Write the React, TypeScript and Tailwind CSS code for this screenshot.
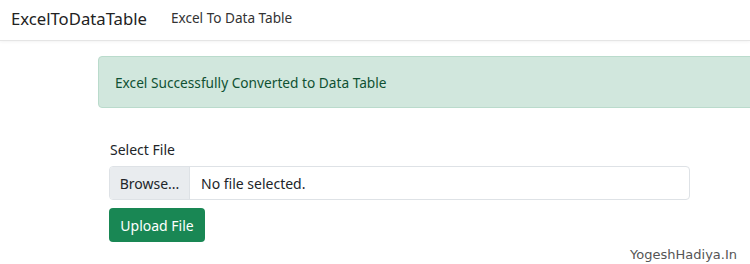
export default function App() {
  return (
    <div className="relative h-[264px] w-[750px] overflow-hidden bg-white font-['Noto_Sans',sans-serif] text-[#212529]">
      {/* ── Navbar ─────────────────────────────────────────────── */}
      <nav className="flex h-[41px] items-center border-b border-[#e5e5e5] shadow-[0_1px_3px_rgba(0,0,0,0.05)]">
        <span className="ml-[11px] -mt-[3px] text-[16.7px] text-[#222]">ExcelToDataTable</span>
        <a className="ml-[24px] -mt-[3px] text-[13.6px] text-[#333]">Excel To Data Table</a>
      </nav>

      {/* ── Success alert ──────────────────────────────────────── */}
      <div className="ml-[98px] mt-[15px] flex h-[52px] w-[700px] items-center rounded-[4px] border border-[#badbcc] bg-[#d1e7dd] pl-[16px] pt-[2px] text-[13.7px] text-[#0f5132]">
        Excel Successfully Converted to Data Table
      </div>

      {/* ── Upload form ────────────────────────────────────────── */}
      <div className="ml-[109px] mt-[32px] w-[581px]">
        <label className="block pl-px text-[14px] leading-[20px]">Select File</label>
        <div className="mt-[6px] flex h-[34px] overflow-hidden rounded-[4px] border border-[#dee2e6] text-[14px]">
          <span className="flex w-[80px] items-center justify-center border-r border-[#dee2e6] bg-[#e9ecef]">
            Browse...
          </span>
          <span className="flex items-center pl-[11px]">No file selected.</span>
        </div>
        <button
          type="button"
          className="mt-[8px] h-[34px] w-[96px] rounded-[4px] bg-[#198754] text-[14px] text-white"
        >
          Upload File
        </button>
      </div>

      {/* ── Watermark ──────────────────────────────────────────── */}
      <span className="absolute right-[13px] top-[245px] font-['DejaVu_Sans',sans-serif] text-[13px] text-[#555]">
        YogeshHadiya.In
      </span>
    </div>
  );
}
